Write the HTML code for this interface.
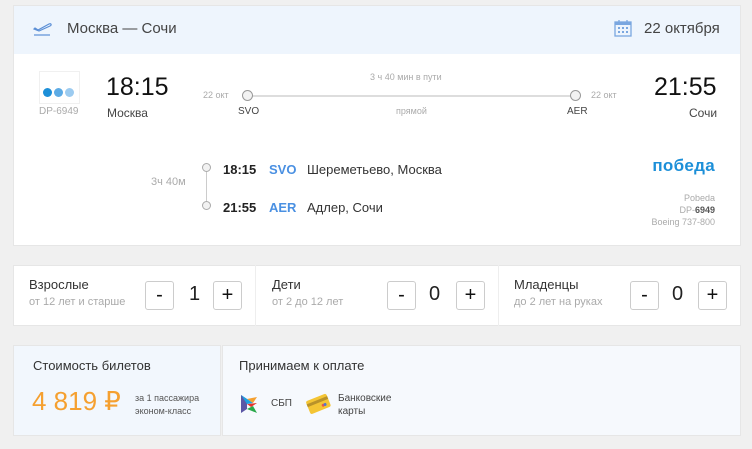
<!DOCTYPE html>
<html><head><meta charset="utf-8"><style>
*{margin:0;padding:0;box-sizing:border-box}
body{width:752px;height:449px;background:#f0f0f0;font-family:"Liberation Sans",sans-serif;position:relative;overflow:hidden;color:#333}
.a{position:absolute;white-space:nowrap}
.card{position:absolute;left:13px;top:5px;width:728px;height:241px;background:#fff;border:1px solid #e6e6e6}
.hdr{position:absolute;left:0;top:0;width:100%;height:48px;background:#eef5fd}
.btn{position:absolute;width:29px;height:29px;border:1px solid #ccc;border-radius:3px;background:#fff;font-size:20px;text-align:center;line-height:26px;color:#111}
.g{color:#aaa}
</style></head><body>
<div class="card">
 <div class="hdr">
  <svg class="a" style="left:19px;top:14px" width="20" height="17" viewBox="0 0 20 17"><path d="M2 8l3 2 11-6c2-1 3 1 1 2L6 11 1 9z" fill="none" stroke="#5b8fd6" stroke-width="1.2"/><path d="M1 15h16" stroke="#5b8fd6" stroke-width="1.2"/></svg>
  <div class="a" style="left:53px;top:14px;font-size:15px;color:#444">Москва — Сочи</div>
  <svg class="a" style="left:600px;top:13px" width="18" height="18" viewBox="0 0 18 18"><rect x="1" y="3" width="16" height="14" fill="none" stroke="#7aa7e0" stroke-width="1.3"/><rect x="1" y="3" width="16" height="3" fill="#7aa7e0"/><path d="M5 1v4M13 1v4" stroke="#7aa7e0" stroke-width="1.3"/><g fill="#7aa7e0"><rect x="4" y="8" width="2" height="2"/><rect x="8" y="8" width="2" height="2"/><rect x="12" y="8" width="2" height="2"/><rect x="4" y="12" width="2" height="2"/><rect x="8" y="12" width="2" height="2"/><rect x="12" y="12" width="2" height="2"/></g></svg>
  <div class="a" style="left:630px;top:14px;font-size:15px;color:#444">22 октября</div>
 </div>
 <div class="a" style="left:25px;top:65px;width:41px;height:33px;border:1px solid #f0f0f0"></div>
 <div class="a" style="left:29px;top:78px"><span style="display:inline-block;width:9px;height:9px;border-radius:50%;background:#1c8fd8;margin-right:2px"></span><span style="display:inline-block;width:9px;height:9px;border-radius:50%;background:#5cabe5;margin-right:2px"></span><span style="display:inline-block;width:9px;height:9px;border-radius:50%;background:#9ccbf0"></span></div>
 <div class="a g" style="left:25px;top:100px;font-size:10px">DP-6949</div>
 <div class="a" style="left:92px;top:67px;font-size:25px;color:#111">18:15</div>
 <div class="a" style="left:93px;top:100px;font-size:12px;color:#444">Москва</div>
 <div class="a g" style="left:189px;top:84px;font-size:9px">22 окт</div>
 <div class="a" style="left:233px;top:89px;width:330px;height:2px;background:#ddd"></div>
 <div class="a" style="left:228px;top:84px;width:11px;height:11px;border-radius:50%;border:1px solid #999;background:#f2f2f2"></div>
 <div class="a" style="left:556px;top:84px;width:11px;height:11px;border-radius:50%;border:1px solid #999;background:#f2f2f2"></div>
 <div class="a g" style="left:577px;top:84px;font-size:9px">22 окт</div>
 <div class="a g" style="left:356px;top:66px;font-size:9px">3 ч 40 мин в пути</div>
 <div class="a g" style="left:382px;top:100px;font-size:9px">прямой</div>
 <div class="a" style="left:224px;top:100px;font-size:10px;color:#444">SVO</div>
 <div class="a" style="left:553px;top:100px;font-size:10px;color:#444">AER</div>
 <div class="a" style="left:640px;top:67px;font-size:25px;color:#111">21:55</div>
 <div class="a" style="left:675px;top:100px;font-size:12px;color:#444">Сочи</div>
 <div class="a" style="left:192px;top:162px;width:1px;height:36px;background:#ccc"></div>
 <div class="a" style="left:188px;top:157px;width:9px;height:9px;border-radius:50%;border:1px solid #aaa;background:#f2f2f2"></div>
 <div class="a" style="left:188px;top:195px;width:9px;height:9px;border-radius:50%;border:1px solid #aaa;background:#f2f2f2"></div>
 <div class="a g" style="left:137px;top:170px;font-size:11px">3ч 40м</div>
 <div class="a" style="left:209px;top:156px;font-size:13px;font-weight:bold;color:#222">18:15</div>
 <div class="a" style="left:255px;top:156px;font-size:13px;font-weight:bold;color:#4a90e2">SVO</div>
 <div class="a" style="left:293px;top:156px;font-size:13px;color:#333">Шереметьево, Москва</div>
 <div class="a" style="left:209px;top:194px;font-size:13px;font-weight:bold;color:#222">21:55</div>
 <div class="a" style="left:255px;top:194px;font-size:13px;font-weight:bold;color:#4a90e2">AER</div>
 <div class="a" style="left:293px;top:194px;font-size:13px;color:#333">Адлер, Сочи</div>
 <div class="a" style="right:25px;top:150px;font-size:17px;font-weight:bold;color:#1c8fd8;letter-spacing:0.3px">победа</div>
 <div class="a" style="right:25px;top:186px;font-size:9px;color:#aaa;text-align:right;line-height:12px">Pobeda<br>DP-<b style="color:#555">6949</b><br>Boeing 737-800</div>
</div>

<div class="a" style="left:13px;top:265px;width:728px;height:61px;background:#fff;border:1px solid #e6e6e6"></div>
<div class="a" style="left:255px;top:265px;width:1px;height:61px;background:#eee"></div>
<div class="a" style="left:498px;top:265px;width:1px;height:61px;background:#eee"></div>
<div class="a" style="left:29px;top:277px;font-size:13px;color:#333">Взрослые</div>
<div class="a g" style="left:29px;top:296px;font-size:11px">от 12 лет и старше</div>
<div class="btn" style="left:145px;top:281px">-</div><div class="a" style="left:189px;top:283px;font-size:20px;color:#222">1</div><div class="btn" style="left:213px;top:281px">+</div>
<div class="a" style="left:272px;top:277px;font-size:13px;color:#333">Дети</div>
<div class="a g" style="left:272px;top:296px;font-size:11px">от 2 до 12 лет</div>
<div class="btn" style="left:387px;top:281px">-</div><div class="a" style="left:429px;top:283px;font-size:20px;color:#222">0</div><div class="btn" style="left:456px;top:281px">+</div>
<div class="a" style="left:514px;top:277px;font-size:13px;color:#333">Младенцы</div>
<div class="a g" style="left:514px;top:296px;font-size:11px">до 2 лет на руках</div>
<div class="btn" style="left:630px;top:281px">-</div><div class="a" style="left:672px;top:283px;font-size:20px;color:#222">0</div><div class="btn" style="left:698px;top:281px">+</div>

<div class="a" style="left:13px;top:345px;width:208px;height:91px;background:#f2f7fd;border:1px solid #e6e6e6"></div>
<div class="a" style="left:222px;top:345px;width:519px;height:91px;background:#f6f9fd;border:1px solid #e6e6e6"></div>
<div class="a" style="left:33px;top:358px;font-size:13px;color:#333">Стоимость билетов</div>
<div class="a" style="left:32px;top:386px;font-size:26px;color:#f5a030">4 819 ₽</div>
<div class="a" style="left:135px;top:392px;font-size:9px;color:#555;line-height:13px">за 1 пассажира<br>эконом-класс</div>
<div class="a" style="left:239px;top:358px;font-size:13px;color:#333">Принимаем к оплате</div>
<svg class="a" style="left:240px;top:393px" width="18" height="22" viewBox="0 0 18 22"><path d="M1 2l6 4v10l-6 4z" fill="#5b57a6"/><path d="M7 6l10-2-4 6z" fill="#f5a030"/><path d="M7 11l10-1-6 4z" fill="#e7352c"/><path d="M7 16l10 4-4-7z" fill="#2aa84a"/><path d="M1 2l12 8-6 1z" fill="#1da1e0"/></svg>
<div class="a" style="left:271px;top:398px;font-size:10px;color:#444">СБП</div>
<svg class="a" style="left:305px;top:392px" width="26" height="22" viewBox="0 0 26 22"><g transform="rotate(-22 13 11)"><rect x="2" y="5" width="22" height="14" rx="2" fill="#f4c534"/><rect x="2" y="8" width="22" height="3" fill="#b9922a"/><circle cx="17" cy="15" r="1.5" fill="#e54"/><circle cx="19" cy="15" r="1.5" fill="#5577cc"/></g></svg>
<div class="a" style="left:338px;top:392px;font-size:10px;color:#444;line-height:13px">Банковские<br>карты</div>
</body></html>
